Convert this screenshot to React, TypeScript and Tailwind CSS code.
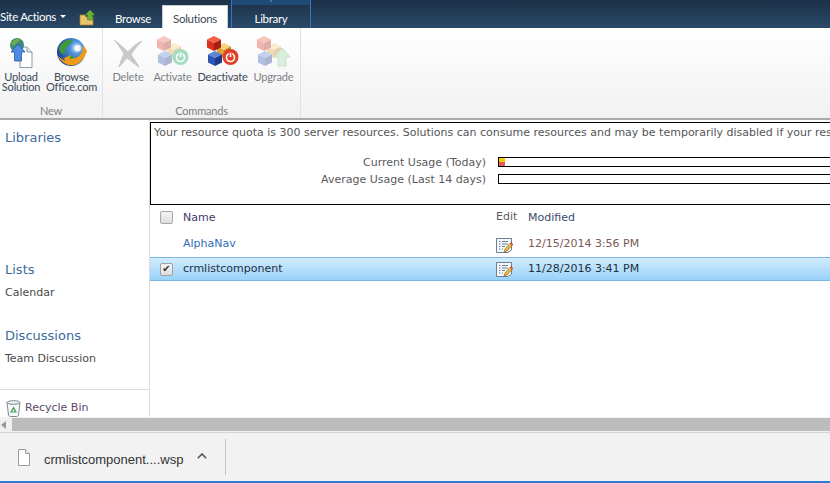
import React from 'react';

const Cube = ({ x, y, top, left, right }: { x: number; y: number; top: string; left: string; right: string }) => (
  <g transform={`translate(${x} ${y})`}>
    <path d="M7 0 14 3.5 7 7 0 3.5Z" fill={top} />
    <path d="M0 3.5 7 7V15L0 11.5Z" fill={left} />
    <path d="M14 3.5 7 7V15L14 11.5Z" fill={right} />
  </g>
);

const Cubes = ({ faded }: { faded?: boolean }) => (
  <g opacity={faded ? 0.35 : 1}>
    <Cube x={10} y={7} top="#f6d27a" left="#e0a032" right="#c9821e" />
    <Cube x={0} y={0} top="#f2604a" left="#d8321e" right="#a81f10" />
    <Cube x={1} y={15} top="#5c86d8" left="#2d56b4" right="#1c3a88" />
  </g>
);

const PowerBadge = ({ color }: { color: string }) => (
  <g>
    <circle cx="23.5" cy="21" r="8" fill={color} />
    <circle cx="23.5" cy="21.5" r="4" fill="none" stroke="#fff" strokeWidth="1.6" />
    <path d="M23.5 17v4" stroke={color} strokeWidth="3.4" />
    <path d="M23.5 17v4" stroke="#fff" strokeWidth="1.6" />
  </g>
);

const ActivateIcon = () => (
  <svg width="32" height="32" viewBox="0 0 32 32">
    <Cubes faded />
    <PowerBadge color="#a5dcc0" />
  </svg>
);

const DeactivateIcon = () => (
  <svg width="32" height="32" viewBox="0 0 32 32">
    <Cubes />
    <PowerBadge color="#e0402a" />
  </svg>
);

const UpgradeIcon = () => (
  <svg width="34" height="32" viewBox="0 0 34 32">
    <Cubes faded />
    <path d="M25 12 33 21H29V30H21V21H17Z" fill="#d9efdc" stroke="#bcdcc2" strokeWidth="0.8" />
  </svg>
);

const DeleteIcon = () => (
  <svg width="30" height="30" viewBox="0 0 30 30">
    <path d="M1 2C7 6 12 11 15 14 19 9 24 5 29 3 24 8 20 13 18 17 21 21 24 25 26 29 21 26 17 22 14 20 11 23 9 26 6 29 7 25 9 20 11 16 8 11 5 6 1 2Z" fill="#c9c9c7" stroke="#b9b9b7" strokeWidth="0.6" />
  </svg>
);

const UploadIcon = () => (
  <svg width="24" height="31" viewBox="0 0 24 31">
    <path d="M11 10H18L23 15V30.5H11Z" fill="#fff" stroke="#8d99a8" />
    <path d="M18 10V15H23" fill="#e6eaf0" stroke="#8d99a8" />
    <circle cx="8" cy="8" r="7" fill="#3f8a78" />
    <path d="M2 6C4 3 8 1 11 2 11 5 7 5 6 8 4 9 3 8 2 6Z" fill="#6fae4c" />
    <path d="M10 8 13 10 11 12 9 11Z" fill="#4b7fc4" />
    <path d="M9 7 16 15H12.5V24H5.5V15H2Z" fill="#4f8be0" stroke="#2559a8" strokeWidth="0.8" />
  </svg>
);

const GlobeIcon = () => (
  <svg width="32" height="31" viewBox="0 0 34 33">
    <defs>
      <radialGradient id="globe" cx="70%" cy="35%" r="75%">
        <stop offset="0" stopColor="#e8f4ff" />
        <stop offset="0.3" stopColor="#4f94dc" />
        <stop offset="1" stopColor="#173f8c" />
      </radialGradient>
    </defs>
    <circle cx="16" cy="16" r="15" fill="url(#globe)" />
    <path d="M3 12C6 5 12 2 17 3 18 6 14 7 13 10 10 11 9 15 10 18 6 19 4 16 3 12Z" fill="#3f9a3c" />
    <path d="M14 21C17 19 21 21 21 25 20 28 17 30 15 30 15 27 13 24 14 21Z" fill="#3f9a3c" />
    <path d="M2 20C5 27 12 31 19 30 25 29 30 24 33 15L29 8 28 15C26 21 20 24 14 23L16 19 8 23 14 29 14 26C10 26 6 24 2 20Z" fill="#ef9a1a" />
    <circle cx="23" cy="12" r="3.5" fill="#fff" opacity="0.8" />
  </svg>
);

const EditIcon = () => (
  <svg width="17" height="17" viewBox="0 0 17 17" className="block">
    <path d="M0.5 1.5H15.5V13L12 15.5H0.5Z" fill="#f4f7fb" stroke="#6f7f90" />
    <path d="M3 4.5H4.5M6 4.5H12M3 7H4.5M6 7H12M3 9.5H4.5M6 9.5H9M3 12H4.5M6 12H7" stroke="#6a7c90" />
    <path d="M8 15 9 12 15 5.5 17 7.5 11 14Z" fill="#eeb63a" stroke="#8a5a1e" strokeWidth="0.6" />
    <path d="M15 5.5 17 7.5 16 8.5 14 6.5Z" fill="#d0452e" />
  </svg>
);

const RecycleIcon = () => (
  <svg width="15" height="17" viewBox="0 0 15 17" className="block">
    <path d="M1 2.5 2.5 15C2.6 16 3.5 16.5 4.5 16.5H10.5C11.5 16.5 12.4 16 12.5 15L14 2.5" fill="#f6f8f9" stroke="#7b8a94" />
    <ellipse cx="7.5" cy="2.5" rx="6.5" ry="1.8" fill="#eef2f4" stroke="#7b8a94" />
    <path d="M7.5 6.5 11 12.5H4Z" fill="#4f9a5a" />
    <path d="M7.5 9 9 11.5H6Z" fill="#e6f2e8" />
  </svg>
);

const FileIcon = () => (
  <svg width="12" height="17" viewBox="0 0 12 17" className="block">
    <path d="M0.5 0.5H7.5L11.5 4.5V16.5H0.5Z" fill="#fff" stroke="#9a9a9a" />
    <path d="M7.5 0.5V4.5H11.5" fill="#eee" stroke="#9a9a9a" />
  </svg>
);

const RibbonButton = ({ icon, label, w, faded }: { icon: React.ReactNode; label: React.ReactNode; w: string; faded?: boolean }) => (
  <div className={`${w} flex flex-col items-center`}>
    <div className="h-[36px] flex items-end justify-center">{icon}</div>
    <div className={`mt-[4px] text-center text-[11px] tracking-[-0.2px] leading-[10px] whitespace-nowrap ${faded ? 'text-[#7c7f84]' : 'text-[#3b4a58]'}`}>{label}</div>
  </div>
);

const NavHeading = ({ children, className }: { children: React.ReactNode; className?: string }) => (
  <div className={`pl-[5px] text-[13px] leading-[16px] text-[#3b6a9c] ${className ?? ''}`}>{children}</div>
);

export default function App() {
  return (
    <div className="w-[830px] h-[483px] overflow-hidden flex flex-col bg-white font-['Lato','Liberation_Sans',sans-serif]">
      {/* Top bar with tabs */}
      <div className="h-[28px] flex shrink-0 bg-gradient-to-b from-[#1c3048] to-[#2a4a68] text-white text-[11.5px] tracking-[-0.3px]">
        <div className="w-[59px] pt-[9px] leading-[16px] whitespace-nowrap">Site Actions</div>
        <div className="w-[20px] pt-[15px] pl-[1px]">
          <div className="w-0 h-0 border-x-[3px] border-x-transparent border-t-[3px] border-t-white" />
        </div>
        <svg width="17" height="16" viewBox="0 0 17 16" className="mt-[10px]">
          <path d="M1 5H6L7 7H14V15H1Z" fill="#e8c568" stroke="#a8852e" strokeWidth="0.7" />
          <path d="M11 0 16 5H13.5V10H8.5V5H6Z" fill="#6cae3a" stroke="#3f7e20" strokeWidth="0.5" />
        </svg>
        <div className="w-[19px]" />
        <div className="w-[47px] pt-[11px] leading-[16px]">Browse</div>
        <div className="w-[66px] mt-[5px] h-[23px] bg-white border border-b-0 border-[#c8ccd0] text-[#3b4a58] text-center pt-[5px] leading-[16px]">Solutions</div>
        <div className="w-[3px]" />
        <div className="w-[80px] border-x border-[#2f78c4] flex flex-col items-center overflow-hidden">
          <div className="h-[5px] w-full bg-[#1e4a78] overflow-hidden text-center">
            <div className="-mt-[12px] leading-[16px] text-[#5f9fe0]">Library Tools</div>
          </div>
          <div className="mt-[6px] leading-[16px]">Library</div>
        </div>
      </div>

      {/* Ribbon */}
      <div className="h-[92px] shrink-0 flex bg-gradient-to-b from-white to-[#f1f1f1] border-b-2 border-[#a9a9a9]">
        <div className="w-[103px] pt-[4px] flex flex-col border-r border-[#e2e2e2]">
          <div className="flex gap-[4px]">
            <RibbonButton w="w-[42px]" icon={<UploadIcon />} label={<>Upload<br />Solution</>} />
            <RibbonButton w="w-[51px]" icon={<GlobeIcon />} label={<>Browse<br />Office.com</>} />
          </div>
          <div className="mt-auto text-center text-[11px] tracking-[-0.2px] leading-[14px] text-[#7c7f84]">New</div>
        </div>
        <div className="w-[198px] pt-[4px] flex flex-col border-r border-[#e2e2e2]">
          <div className="flex pl-[6px]">
            <RibbonButton faded w="w-[38px]" icon={<DeleteIcon />} label="Delete" />
            <div className="w-[3px]" />
            <RibbonButton faded w="w-[45px]" icon={<ActivateIcon />} label="Activate" />
            <RibbonButton w="w-[55px]" icon={<DeactivateIcon />} label="Deactivate" />
            <RibbonButton faded w="w-[47px]" icon={<UpgradeIcon />} label="Upgrade" />
          </div>
          <div className="mt-auto text-center text-[11px] tracking-[-0.2px] leading-[14px] text-[#7c7f84]">Commands</div>
        </div>
      </div>

      {/* Body */}
      <div className="h-[297px] shrink-0 flex overflow-hidden font-['DejaVu_Sans',sans-serif]">
        <div className="w-[150px] shrink-0 flex flex-col border-r border-[#dcdcdc] text-[11px] text-[#4a4a4a]">
          <NavHeading className="mt-[10px]">Libraries</NavHeading>
          <NavHeading className="mt-[116px]">Lists</NavHeading>
          <div className="pl-[5px] mt-[7px] leading-[16px]">Calendar</div>
          <NavHeading className="mt-[27px]">Discussions</NavHeading>
          <div className="pl-[5px] mt-[7px] leading-[16px]">Team Discussion</div>
          <div className="mt-[22px] border-t border-[#dcdcdc] pl-[6px] pt-[10px] flex items-center gap-[4px] text-[#5a4a6a]">
            <RecycleIcon />
            <span>Recycle Bin</span>
          </div>
        </div>

        <div className="flex-1 min-w-0 overflow-hidden pt-[2px] text-[11px] text-[#4a4a4a]">
          <div className="w-[760px] h-[83px] border border-black pl-[3px] pt-[2px]">
            <div className="leading-[16px] whitespace-nowrap text-[#555555]">Your resource quota is 300 server resources. Solutions can consume resources and may be temporarily disabled if your resource usage exceeds your quota.</div>
            <div className="mt-[12px] flex items-center h-[17px]">
              <div className="w-[332px] pt-[3px] text-right text-[#5a5a5a] whitespace-nowrap">Current Usage (Today)</div>
              <div className="ml-[12px] flex-1 h-[10px] border border-black flex flex-col">
                <div className="w-[6px] h-1/2 bg-[#fcc800]" />
                <div className="w-[6px] h-1/2 bg-[#e85a50]" />
              </div>
            </div>
            <div className="flex items-center h-[17px]">
              <div className="w-[332px] pt-[3px] text-right text-[#5a5a5a] whitespace-nowrap">Average Usage (Last 14 days)</div>
              <div className="ml-[12px] flex-1 h-[10px] border border-black" />
            </div>
          </div>

          <div className="h-[25px] flex items-center">
            <div className="w-[33px] pl-[10px]">
              <div className="w-[13px] h-[13px] rounded-[2px] border border-[#a8a8a8] bg-gradient-to-b from-[#f4f4f4] to-[#dedede]" />
            </div>
            <div className="w-[313px] pt-[2px] text-[#3a3a6a]">Name</div>
            <div className="w-[32px] text-[#5a5a5a]">Edit</div>
            <div className="pt-[2px] text-[#3a4a6a]">Modified</div>
          </div>
          <div className="h-[27px] flex items-center">
            <div className="w-[33px]" />
            <div className="w-[313px] pt-[2px] text-[#2f6fb4]">AlphaNav</div>
            <div className="w-[32px] pt-[3px]"><EditIcon /></div>
            <div className="pt-[2px] text-[#7a5a50]">12/15/2014 3:56 PM</div>
          </div>
          <div className="h-[24px] flex items-center bg-gradient-to-b from-[#d2ecfe] to-[#98d2f8] border-y border-[#7ab4e0] text-[#1f2f3f]">
            <div className="w-[33px] pl-[10px]">
              <div className="w-[13px] h-[13px] rounded-[2px] border border-[#a0a0a0] bg-gradient-to-b from-[#f4f4f4] to-[#dedede] flex items-center justify-center text-[10px] leading-none text-[#303030]">✔</div>
            </div>
            <div className="w-[313px]">crmlistcomponent</div>
            <div className="w-[32px] pt-[1px]"><EditIcon /></div>
            <div>11/28/2016 3:41 PM</div>
          </div>
        </div>
      </div>

      {/* Horizontal scrollbar */}
      <div className="h-[16px] shrink-0 flex items-center bg-[#f1f1f1] border-b border-[#d4d4d4]">
        <div className="w-[12px] pl-[1px]">
          <div className="w-0 h-0 border-y-[4px] border-y-transparent border-r-[5px] border-r-[#9a9a9a]" />
        </div>
        <div className="flex-1 h-[13px] bg-[#bcbcbc]" />
      </div>

      {/* Download bar */}
      <div className="flex-1 flex items-center bg-[#f2f2f2] border-b-2 border-[#2b7cd3] pl-[18px] font-['Liberation_Sans',sans-serif]">
        <FileIcon />
        <div className="ml-[14px] mt-[6px] w-[153px] text-[13px] text-[#333333] whitespace-nowrap">crmlistcomponent....wsp</div>
        <svg width="10" height="6" viewBox="0 0 10 6" className="-mt-[2px]">
          <path d="M0.8 5.2 5 1 9.2 5.2" fill="none" stroke="#555555" strokeWidth="1.6" />
        </svg>
        <div className="ml-[18px] w-px h-[36px] bg-[#c4c4c4]" />
      </div>
    </div>
  );
}
